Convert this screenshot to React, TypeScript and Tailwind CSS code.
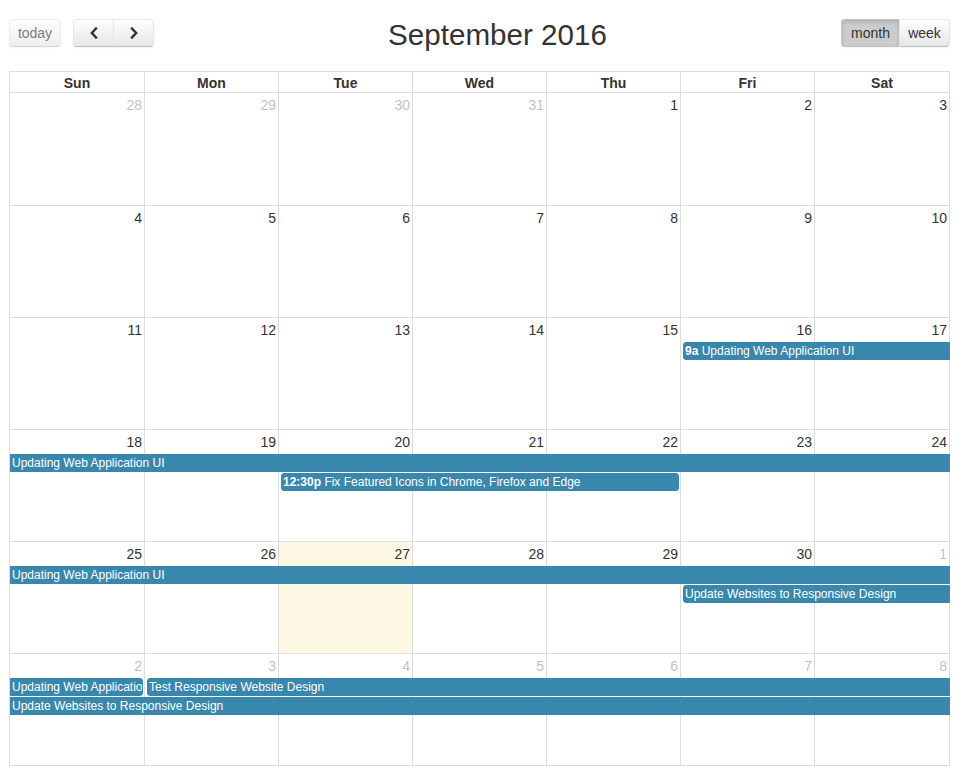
import React from "react";

type Day = { d: number; other: boolean; today?: boolean };
type Seg = {
  col: number;
  span: number;
  level: number;
  title: string;
  time?: string;
  isStart: boolean;
  isEnd: boolean;
};

const colStart = ["col-start-1", "col-start-2", "col-start-3", "col-start-4", "col-start-5", "col-start-6", "col-start-7"];
const colSpan = ["col-span-1", "col-span-2", "col-span-3", "col-span-4", "col-span-5", "col-span-6", "col-span-7"];
const rowStart = ["row-start-2", "row-start-3"];

const weeks: Day[][] = [
  [28, 29, 30, 31].map((d) => ({ d, other: true })).concat([1, 2, 3].map((d) => ({ d, other: false }))),
  [4, 5, 6, 7, 8, 9, 10].map((d) => ({ d, other: false })),
  [11, 12, 13, 14, 15, 16, 17].map((d) => ({ d, other: false })),
  [18, 19, 20, 21, 22, 23, 24].map((d) => ({ d, other: false })),
  [25, 26, 27, 28, 29, 30].map((d) => ({ d, other: false, today: d === 27 })).concat([{ d: 1, other: true }]),
  [2, 3, 4, 5, 6, 7, 8].map((d) => ({ d, other: true })),
];

const events: Seg[][] = [
  [],
  [],
  [{ col: 5, span: 2, level: 0, title: "Updating Web Application UI", time: "9a", isStart: true, isEnd: false }],
  [
    { col: 0, span: 7, level: 0, title: "Updating Web Application UI", isStart: false, isEnd: false },
    { col: 2, span: 3, level: 1, title: "Fix Featured Icons in Chrome, Firefox and Edge", time: "12:30p", isStart: true, isEnd: true },
  ],
  [
    { col: 0, span: 7, level: 0, title: "Updating Web Application UI", isStart: false, isEnd: false },
    { col: 5, span: 2, level: 1, title: "Update Websites to Responsive Design", isStart: true, isEnd: false },
  ],
  [
    { col: 0, span: 1, level: 0, title: "Updating Web Application UI", isStart: false, isEnd: true },
    { col: 1, span: 6, level: 0, title: "Test Responsive Website Design", isStart: true, isEnd: false },
    { col: 0, span: 7, level: 1, title: "Update Websites to Responsive Design", isStart: false, isEnd: false },
  ],
];

const dayNames = ["Sun", "Mon", "Tue", "Wed", "Thu", "Fri", "Sat"];

const btn =
  "h-[28px] px-[8.4px] text-[14px] text-[#333] border border-[#e6e6e6] border-b-[#bfbfbf] bg-[#f5f5f5] bg-gradient-to-b from-white to-[#e6e6e6] shadow-[inset_0_1px_0_rgba(255,255,255,0.2),0_1px_2px_rgba(0,0,0,0.05)] flex items-center justify-center";

function Chevron({ left }: { left?: boolean }) {
  return (
    <svg width="10" height="12" viewBox="0 0 10 12" fill="none">
      <polyline
        points={left ? "7,1.5 2.8,6 7,10.5" : "3,1.5 7.2,6 3,10.5"}
        stroke="#333"
        strokeWidth="2.4"
        strokeLinecap="square"
        strokeLinejoin="miter"
      />
    </svg>
  );
}

export default function App() {
  return (
    <div className="font-['Liberation_Sans',Arial,sans-serif] text-[#333] bg-white min-h-[780px] pt-[19px] pl-[9px]">
      <div className="w-[941px]">
        <div className="flex items-center h-[28px] mb-[24px]">
          <div className="flex items-center">
            <button className={btn + " rounded-[4px] opacity-65 w-[52px]"}>today</button>
            <div className="flex ml-[12px]">
              <button className={btn + " rounded-l-[4px] w-[41px]"}>
                <Chevron left />
              </button>
              <button className={btn + " rounded-r-[4px] w-[41px] -ml-px"}>
                <Chevron />
              </button>
            </div>
          </div>
          <div className="flex-1 text-center text-[29.6px] leading-[34px] pt-[3px]">September 2016</div>
          <div className="flex">
            <button className="h-[28px] w-[58px] text-[14px] text-[#333] border border-[#c4c4c4] border-r-0 bg-[#cccccc] rounded-l-[4px] shadow-[inset_0_2px_4px_rgba(0,0,0,0.15),0_1px_2px_rgba(0,0,0,0.05)]">
              month
            </button>
            <button className={btn + " rounded-r-[4px] w-[51px]"}>week</button>
          </div>
        </div>

        <div className="border-l border-t border-[#dddddd]">
          <div className="grid grid-cols-[135px_repeat(5,134px)_135px]">
            {dayNames.map((n) => (
              <div
                key={n}
                className="h-[21px] border-r border-b border-[#dddddd] text-center text-[14px] font-bold leading-[20px] pt-[1px]"
              >
                {n}
              </div>
            ))}
          </div>
          {weeks.map((week, wi) => (
            <div
              key={wi}
              className={
                "grid grid-cols-[135px_repeat(5,134px)_135px] grid-rows-[23px_19px_19px_1fr] " +
                (wi === 0 ? "h-[113px]" : "h-[112px]")
              }
            >
              {week.map((day, di) => (
                <div
                  key={di}
                  className={
                    colStart[di] +
                    " row-span-full row-start-1 border-r border-b border-[#dddddd] text-right pr-[2px] pt-[2px] text-[14px] leading-[20px] " +
                    (day.today ? "bg-[#fcf8e3]" : "")
                  }
                >
                  <span className={day.other ? "opacity-30" : ""}>{day.d}</span>
                </div>
              ))}
              {events[wi].map((ev, ei) => (
                <div
                  key={"e" + ei}
                  className={
                    colStart[ev.col] +
                    " " +
                    colSpan[ev.span - 1] +
                    " " +
                    rowStart[ev.level] +
                    " self-start mt-[1px] h-[18px] bg-[#3a87ad] border border-[#3a87ad] text-white text-[12px] leading-[16px] px-[1px] overflow-hidden whitespace-nowrap min-w-0 " +
                    (ev.isStart ? "ml-[2px] rounded-l-[3px] " : "") +
                    (ev.isEnd ? "mr-[2px] rounded-r-[3px] " : "")
                  }
                >
                  {ev.time ? <span className="font-bold">{ev.time} </span> : null}
                  {ev.title}
                </div>
              ))}
            </div>
          ))}
        </div>
      </div>
    </div>
  );
}
